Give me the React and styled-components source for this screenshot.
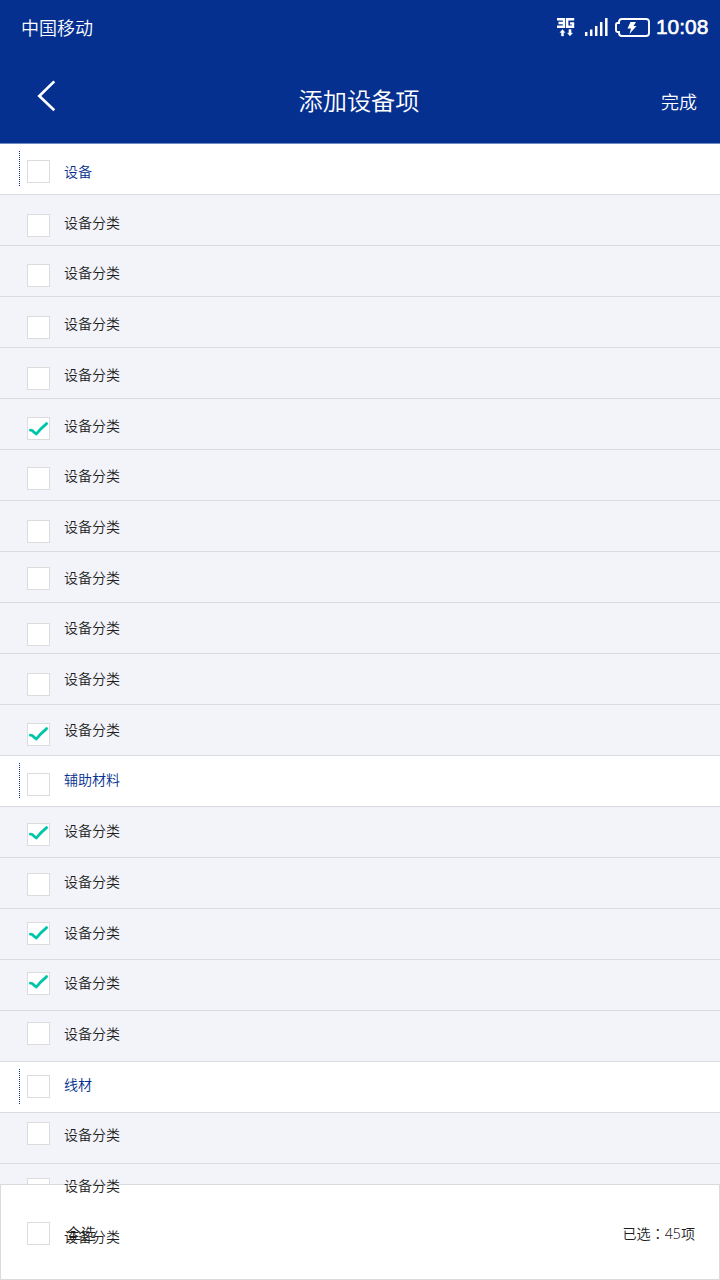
import React from 'react';
import styled, { createGlobalStyle } from 'styled-components';

const GlobalStyle = createGlobalStyle`
  * { box-sizing: border-box; }
  body {
    margin: 0;
    font-family: "Noto Sans", "Noto Sans CJK SC", sans-serif;
    font-weight: 300;
  }
`;

const Screen = styled.div`
  position: relative;
  width: 720px;
  height: 1280px;
  overflow: hidden;
  background: #f3f4f9;
`;

const Header = styled.header`
  height: 144px;
  background: #05308f;
  border-bottom: 1px solid #6f8bc4;
  color: #fff;
`;

const StatusBar = styled.div`
  display: flex;
  align-items: center;
  height: 54px;
  padding: 0 11px 0 21px;
`;

const Carrier = styled.span`
  flex: 1;
  font-size: 18px;
  line-height: 26px;
  font-weight: 350;
  margin-top: 1px;
`;

const StatusIcons = styled.svg`
  display: block;
  width: 96px;
  height: 24px;
  margin-right: 4px;
`;

const Clock = styled.span`
  width: 53px;
  font: 400 20.9px/24px "Liberation Sans", sans-serif;
  -webkit-text-stroke: 0.6px #fff;
  white-space: nowrap;
`;

const NavBar = styled.nav`
  display: grid;
  grid-template-columns: 120px 1fr 120px;
  height: 89px;
  padding-top: 25px;
`;

const BackButton = styled.button`
  justify-self: start;
  align-self: start;
  display: block;
  padding: 0;
  margin-left: 36px;
  border: 0;
  background: none;
  svg { display: block; }
`;

const Title = styled.h1`
  margin: 4px 0 0;
  padding-right: 2px;
  font-size: 24.2px;
  line-height: 36px;
  font-weight: 350;
  text-align: center;
`;

const DoneButton = styled.button`
  justify-self: end;
  align-self: start;
  padding: 0;
  margin: 10px 23px 0 0;
  border: 0;
  background: none;
  color: #fff;
  font: inherit;
  font-weight: 350;
  font-size: 18px;
  line-height: 26px;
`;

const Row = styled.li`
  display: flex;
  align-items: flex-start;
  height: 51px;
  padding-left: 19px;
  border-bottom: 1px solid #dadbdf;
  background: ${(p) => (p.$group ? '#fff' : '#f3f4f9')};
`;

const List = styled.ul`
  margin: 0;
  padding: 0;
  list-style: none;
`;

const GroupMark = styled.svg`
  flex: none;
  width: 1px;
  height: 35px;
  margin: 7px 7px 0 0;
  visibility: ${(p) => (p.$visible ? 'visible' : 'hidden')};
`;

const Box = styled.span`
  flex: none;
  width: 23px;
  height: 23px;
  margin-top: ${(p) => p.$top}px;
  border: 1px solid #dcdcdc;
  background: #fff;
`;

const Tick = styled.svg`
  display: block;
  width: 21px;
  height: 15px;
  margin-top: ${(p) => p.$top}px;
`;

const Label = styled.span`
  position: relative;
  z-index: 2;
  margin: ${(p) => p.$top}px 0 0 14px;
  font-size: 14px;
  line-height: 20px;
  font-weight: 350;
  color: ${(p) => (p.$group ? '#05308f' : '#1e1e1e')};
`;

const Footer = styled.footer`
  position: absolute;
  z-index: 1;
  left: 0;
  right: 0;
  bottom: 0;
  display: flex;
  align-items: flex-start;
  height: 96px;
  padding: 0 24px 0 26px;
  border: 1px solid #dadbdd;
  background: #fff;
  font-size: 14px;
  line-height: 20px;
  font-weight: 350;
  color: #1e1e1e;
`;

const SelectAll = styled.span`
  flex: 1;
  margin: 38px 0 0 16px;
  font-size: 15px;
`;

const Count = styled.span`
  margin-top: 38px;
  font-size: 14.1px;
`;

const Colon = styled.span`
  font-family: "Noto Sans CJK TC", sans-serif;
`;

// boxTop and tickTop are offsets inside the row and the box.
const rows = [
  { label: '设备', group: true, boxTop: 16 },
  { boxTop: 19 },
  { boxTop: 18 },
  { boxTop: 19 },
  { boxTop: 19 },
  { boxTop: 18, tickTop: 3 },
  { boxTop: 17 },
  { boxTop: 19 },
  { boxTop: 15 },
  { boxTop: 20 },
  { boxTop: 19 },
  { boxTop: 18, tickTop: 2 },
  { label: '辅助材料', group: true, boxTop: 17, textTop: 14 },
  { boxTop: 16, tickTop: 1 },
  { boxTop: 15 },
  { boxTop: 13, tickTop: 2 },
  { boxTop: 12, tickTop: 1 },
  { boxTop: 11 },
  { label: '线材', group: true, boxTop: 13 },
  { boxTop: 9 },
  { boxTop: 14 },
  { boxTop: 14 },
];

function Checkbox({ top, tickTop }) {
  return (
    <Box $top={top}>
      {tickTop !== undefined && (
        <Tick $top={tickTop} viewBox="0 0 21 15">
          <path d="M2.4 9.2 Q4.5 9.2 5.6 10.8 L8.3 13 Q12.5 7.7 18.6 2.6" fill="none" stroke="#00c5a8" strokeWidth="2.8" strokeLinecap="round" strokeLinejoin="round" />
        </Tick>
      )}
    </Box>
  );
}

export default function App() {
  return (
    <Screen>
      <GlobalStyle />
      <Header>
        <StatusBar>
          <Carrier>中国移动</Carrier>
          <StatusIcons viewBox="556 15 96 24" fill="none">
            <path d="M557 19.2H564V26.8H557M558.5 23H564M574.2 19.2H567.2V26.8H573V23.4H570" stroke="#fff" strokeWidth="2.4" />
            <path d="M562.5 29.5L565 32.5H563.6V36H561.4V32.5H560ZM570 36L567.5 33H568.9V29.5H571.1V33H572.5Z" fill="#fff" stroke="#fff" strokeWidth=".4" />
            <path d="M586.2 32V36M591.2 29.5V36M596.2 26V36M601.2 22V36M606.3 18V36" stroke="#fff" strokeWidth="2.5" />
            <path d="M622 19H646Q649 19 649 22V33Q649 36 646 36H622Q619 36 619 33V32H617.5Q616 32 616 30.5V24.5Q616 23 617.5 23H619V22Q619 19 622 19Z" stroke="#fff" strokeWidth="1.9" />
            <path d="M630.5 22H636L633.5 26H636.5L629.5 34L631 28.5H627.5Z" fill="#fff" />
          </StatusIcons>
          <Clock>10:08</Clock>
        </StatusBar>
        <NavBar>
          <BackButton aria-label="返回">
            <svg width="22" height="34" viewBox="0 0 22 34">
              <path d="M18.3 2.4L3.3 17L18.3 31.3" fill="none" stroke="#fff" strokeWidth="2.7" />
            </svg>
          </BackButton>
          <Title>添加设备项</Title>
          <DoneButton>完成</DoneButton>
        </NavBar>
      </Header>
      <List>
        {rows.map(({ label = '设备分类', group, boxTop, tickTop, textTop }, i) => (
          <Row key={i} $group={group}>
            <GroupMark $visible={group} viewBox="0 0 1 35">
              <path d="M.5 0V35" stroke="#05308f" strokeDasharray="1 1" />
            </GroupMark>
            <Checkbox top={boxTop} tickTop={tickTop} />
            <Label $group={group} $top={textTop ?? Math.round(18 - i * 0.29)}>{label}</Label>
          </Row>
        ))}
      </List>
      <Footer>
        <Checkbox top={37} />
        <SelectAll>全选</SelectAll>
        <Count>已选<Colon>：</Colon>45项</Count>
      </Footer>
    </Screen>
  );
}
